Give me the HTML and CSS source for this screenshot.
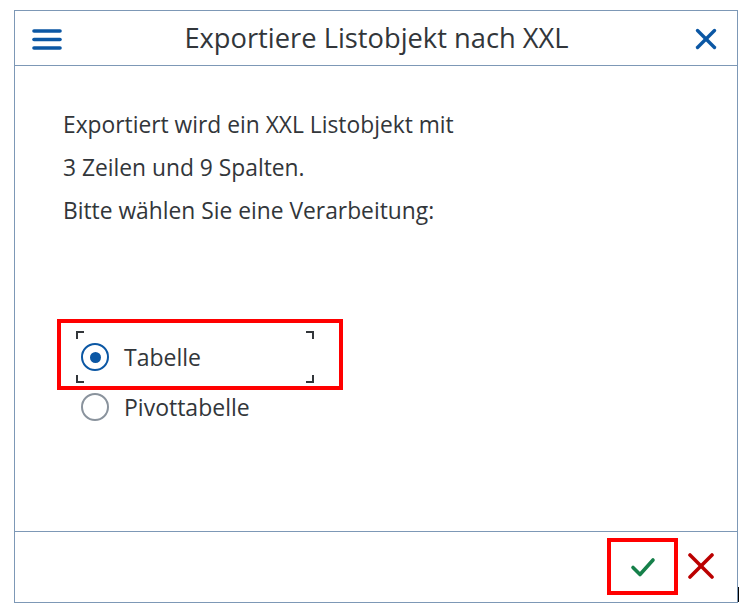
FILE: index.html
```html
<!DOCTYPE html>
<html lang="de">
<head>
<meta charset="utf-8">
<title>Exportiere Listobjekt nach XXL</title>
<link rel="stylesheet" href="styles.css">
</head>
<body>
<div class="dialog">
  <header class="header">
    <button class="icon-btn menu" aria-label="Menü">
      <svg width="30" height="22" viewBox="0 0 30 22"><g stroke="#0b57a4" stroke-width="3.6" stroke-linecap="round"><line x1="2" y1="3" x2="28" y2="3"/><line x1="2" y1="11.5" x2="28" y2="11.5"/><line x1="2" y1="20" x2="28" y2="20"/></g></svg>
    </button>
    <h1 class="title">Exportiere Listobjekt nach XXL</h1>
    <button class="icon-btn close" aria-label="Schließen">
      <svg width="22" height="22" viewBox="0 0 22 22"><g stroke="#0b57a4" stroke-width="3.4" stroke-linecap="round"><line x1="2.5" y1="2.5" x2="19.5" y2="19.5"/><line x1="19.5" y1="2.5" x2="2.5" y2="19.5"/></g></svg>
    </button>
  </header>
  <main class="content">
    <p class="line">Exportiert wird ein XXL Listobjekt mit</p>
    <p class="line">3 Zeilen und 9 Spalten.</p>
    <p class="line">Bitte wählen Sie eine Verarbeitung:</p>
    <div class="options">
      <div class="highlight">
        <label class="option focused">
          <span class="radio checked"></span>
          <span class="label">Tabelle</span>
        </label>
      </div>
      <label class="option second">
        <span class="radio"></span>
        <span class="label">Pivottabelle</span>
      </label>
    </div>
  </main>
  <footer class="footer">
    <div class="highlight-btn">
      <button class="icon-btn ok" aria-label="OK">
        <svg width="26" height="22" viewBox="0 0 26 22"><polyline points="3,11.5 10,18.5 23,4" fill="none" stroke="#16804a" stroke-width="3.6" stroke-linecap="round" stroke-linejoin="round"/></svg>
      </button>
    </div>
    <button class="icon-btn cancel" aria-label="Abbrechen">
      <svg width="26" height="26" viewBox="0 0 26 26"><g stroke="#bb0000" stroke-width="3.6" stroke-linecap="round"><line x1="2" y1="2" x2="24" y2="24"/><line x1="24" y1="2" x2="2" y2="24"/></g></svg>
    </button>
  </footer>
</div>
</body>
</html>
```

FILE: styles.css
```css
* { box-sizing: border-box; }
html, body { margin: 0; padding: 0; background: #ffffff; }
body {
  font-family: "Open Sans", "Noto Sans", "Liberation Sans", sans-serif;
  color: #32363a;
  width: 745px;
  height: 606px;
  overflow: hidden;
}
.dialog {
  position: relative;
  margin: 10px 0 0 14px;
  width: 724px;
  height: 593px;
  border: 1px solid #7d98b6;
  display: flex;
  flex-direction: column;
}
.dialog::after {
  content: "";
  position: absolute;
  right: -2px;
  bottom: 0;
  width: 1px;
  height: 15px;
  background: #000;
}
.icon-btn {
  border: 0;
  background: transparent;
  padding: 0;
  margin: 0;
  display: flex;
  align-items: center;
  justify-content: center;
  cursor: pointer;
}
.header {
  height: 55px;
  border-bottom: 1px solid #7d98b6;
  display: flex;
  align-items: center;
  padding: 0 20px 0 17px;
}
.menu { width: 30px; height: 22px; margin-top: 1px; }
.title {
  flex: 1;
  margin: 0 4px 0 0;
  text-align: center;
  font-weight: 400;
  font-size: 27.3px;
  line-height: 34px;
  color: #32363a;
}
.close { width: 22px; height: 22px; margin-top: 1px; }
.content {
  flex: 1;
  padding: 37px 0 0 48px;
}
.line {
  margin: 0;
  font-size: 22.8px;
  line-height: 43px;
  white-space: nowrap;
}
.options {
  margin-top: 87px;
  margin-left: -6px;
}
.highlight {
  width: 286px;
  height: 71px;
  border: 4px solid #ff0000;
  padding: 8px 0 0 15px;
}
.option {
  display: flex;
  align-items: center;
  font-size: 23px;
}
.option.focused {
  position: relative;
  width: 238px;
  height: 52px;
  padding-left: 5px;
}
.option.focused::before,
.option.focused::after {
  content: "";
  position: absolute;
  inset: 0;
  pointer-events: none;
}
.option.focused::before {
  background:
    linear-gradient(#32363a, #32363a) left top / 8px 2px no-repeat,
    linear-gradient(#32363a, #32363a) left top / 2px 8px no-repeat,
    linear-gradient(#32363a, #32363a) right top / 8px 2px no-repeat,
    linear-gradient(#32363a, #32363a) right top / 2px 8px no-repeat;
}
.option.focused::after {
  background:
    linear-gradient(#32363a, #32363a) left bottom / 8px 2px no-repeat,
    linear-gradient(#32363a, #32363a) left bottom / 2px 8px no-repeat,
    linear-gradient(#32363a, #32363a) right bottom / 8px 2px no-repeat,
    linear-gradient(#32363a, #32363a) right bottom / 2px 8px no-repeat;
}
.option.second {
  height: 34px;
  margin-left: 19px;
  padding-left: 5px;
}
.radio {
  width: 28px;
  height: 28px;
  border-radius: 50%;
  border: 2px solid #8a939d;
  background: #fff;
  flex: none;
  position: relative;
}
.radio.checked { border-color: #0b57a4; }
.radio.checked::after {
  content: "";
  position: absolute;
  left: 50%;
  top: 50%;
  width: 11px;
  height: 11px;
  margin: -5.5px 0 0 -5.5px;
  border-radius: 50%;
  background: #0b57a4;
}
.label {
  margin-left: 15px;
  line-height: 30px;
}
.footer {
  height: 71px;
  border-top: 1px solid #7d98b6;
  display: flex;
  align-items: flex-start;
  justify-content: flex-end;
  padding: 6px 23px 0 0;
}
.highlight-btn {
  width: 71px;
  height: 57px;
  border: 4px solid #ff0000;
  display: flex;
  align-items: center;
  justify-content: center;
}
.ok { width: 26px; height: 22px; }
.cancel {
  width: 26px;
  height: 26px;
  margin: 15px 0 0 10px;
}
```
